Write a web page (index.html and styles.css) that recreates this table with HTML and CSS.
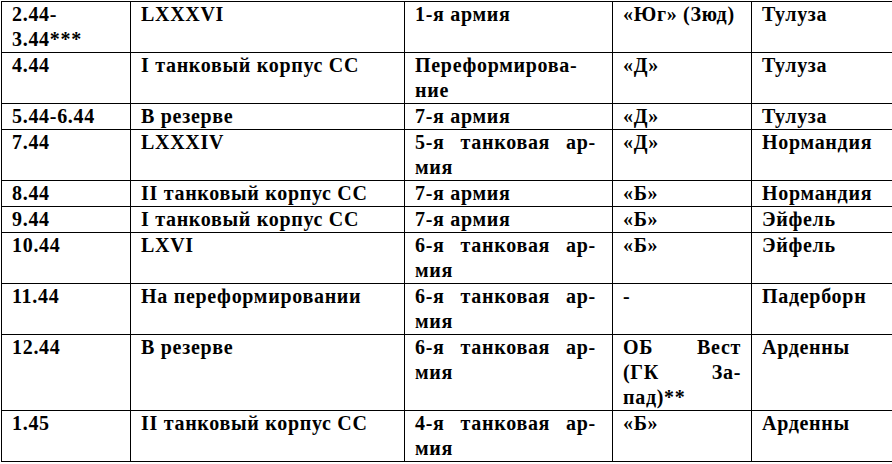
FILE: index.html
```html
<!DOCTYPE html>
<html>
<head>
<meta charset="utf-8">
<link rel="stylesheet" href="styles.css">
</head>
<body>
<table class="tbl">
<colgroup>
<col class="c1"><col class="c2"><col class="c3"><col class="c4"><col class="c5">
</colgroup>
<tr><td>2.44-<br>3.44***</td><td>LXXXVI</td><td>1-я армия</td><td>«Юг» (Зюд)</td><td>Тулуза</td></tr>
<tr><td>4.44</td><td>I танковый корпус СС</td><td>Переформирова-<br>ние</td><td>«Д»</td><td>Тулуза</td></tr>
<tr><td>5.44-6.44</td><td>В резерве</td><td>7-я армия</td><td>«Д»</td><td>Тулуза</td></tr>
<tr><td>7.44</td><td>LXXXIV</td><td><span class="j">5-я танковая ар-</span>мия</td><td>«Д»</td><td>Нормандия</td></tr>
<tr><td>8.44</td><td>II танковый корпус СС</td><td>7-я армия</td><td>«Б»</td><td>Нормандия</td></tr>
<tr><td>9.44</td><td>I танковый корпус СС</td><td>7-я армия</td><td>«Б»</td><td>Эйфель</td></tr>
<tr><td>10.44</td><td>LXVI</td><td><span class="j">6-я танковая ар-</span>мия</td><td>«Б»</td><td>Эйфель</td></tr>
<tr><td>11.44</td><td>На переформировании</td><td><span class="j">6-я танковая ар-</span>мия</td><td>-</td><td>Падерборн</td></tr>
<tr><td>12.44</td><td>В резерве</td><td><span class="j">6-я танковая ар-</span>мия</td><td><span class="j">ОБ Вест</span><span class="j">(ГК За-</span>пад)**</td><td>Арденны</td></tr>
<tr><td>1.45</td><td>II танковый корпус СС</td><td><span class="j">4-я танковая ар-</span>мия</td><td>«Б»</td><td>Арденны</td></tr>
</table>
</body>
</html>
```

FILE: styles.css
```css
body {
  margin: 0;
  font-family: "Liberation Serif", serif;
  font-weight: bold;
  font-size: 20px;
}
.tbl {
  margin: 1px 0 0 1px;
  border-collapse: collapse;
  table-layout: fixed;
  width: 930px;
}
.c1 { width: 129px; }
.c2 { width: 274px; }
.c3 { width: 208px; }
.c4 { width: 139px; }
.c5 { width: 180px; }
.tbl td {
  font: inherit;
  line-height: 1.25;
  letter-spacing: 0.7px;
  border: 1px solid #000;
  padding: 0 10px;
  vertical-align: top;
  white-space: nowrap;
  overflow: hidden;
}
.tbl td:nth-child(3) { padding-right: 16px; }
.j {
  display: block;
  text-align: justify;
  text-align-last: justify;
  white-space: normal;
}
```
